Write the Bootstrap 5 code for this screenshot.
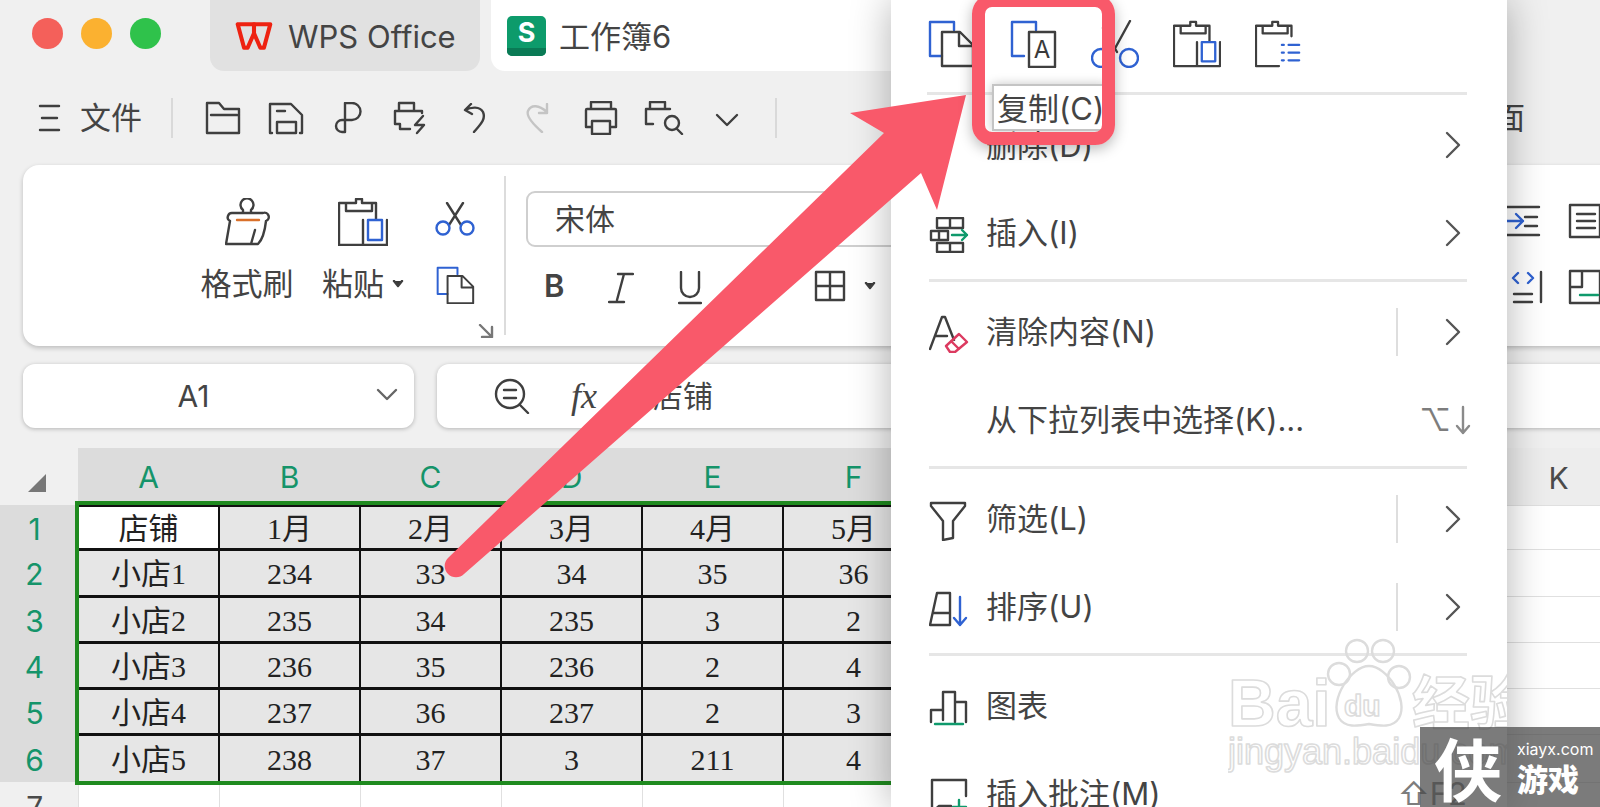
<!DOCTYPE html>
<html lang="zh-CN">

<head>
    <meta charset="UTF-8">
    <title>工作簿6</title>
    <link href="https://cdn.jsdelivr.net/npm/bootstrap@5.3.3/dist/css/bootstrap.min.css" rel="stylesheet">
    <style>
        body {
            background: #f0f0f0;
            color: #444;
            font-family: "Inter", "Noto Sans CJK SC", sans-serif;
            overflow: hidden;
        }

        svg { fill: none; stroke: #3f3f3f; stroke-width: 2.4; stroke-linecap: round; stroke-linejoin: round; flex: none; }
        .st-b { stroke: #2f62d2; }
        .st-g { stroke: #0f9a6c; }
        .st-r { stroke: #dc3a60; }
        .icon-text { fill: #3a3a3a; stroke: none; font: 24px "Inter", sans-serif; }

        .page-wrap { width: 1600px; height: 807px; overflow: hidden; position: relative; }

        /* title bar */
        .title-bar { height: 71px; }
        .lights { width: 210px; padding: 0 0 5px 32px; gap: 18px; }
        .light { width: 31px; height: 31px; border-radius: 50%; }
        .tab-item { height: 71px; font-size: 31px; border-radius: 0 0 14px 14px; }
        .tab-item span { padding-top: 3px; }
        .tab-wps { width: 270px; background: #e1e1e1; padding-left: 25px; gap: 15px; }
        .tab-book { width: 500px; background: #fff; margin-left: 11px; padding-left: 16px; gap: 13px; }

        /* quick toolbar */
        .quick-bar { height: 94px; padding-left: 38px; }
        .quick-name { font-size: 31px; margin-left: 19px; width: 91px; }
        .quick-sep { width: 2px; height: 40px; background: #d9d9d9; }
        .quick-btn { width: 63px; text-align: center; }
        .quick-end { font-size: 31px; margin-right: 75px; }

        /* ribbon */
        .ribbon-card { width: 1600px; height: 181px; margin-left: 23px; border: 0; border-radius: 16px 0 0 16px; box-shadow: 0 2px 5px rgba(0, 0, 0, .22); }
        .rb-left { width: 481px; position: relative; padding: 33px 0 0 176px; }
        .rb-col { font-size: 31px; line-height: 40px; }
        .rb-col svg { height: 48px; margin-bottom: 18px; }
        .rb-corner { position: absolute; right: 10px; bottom: 8px; }
        .rb-vsep { width: 2px; height: 159px; margin-top: 11px; background: #dcdcdc; }
        .rb-font { margin-left: 20px; padding-top: 26px; }
        .font-box { width: 520px; height: 56px; border: 2px solid #cfcfcf; border-radius: 9px; font-size: 30px; padding-left: 27px; }
        .font-btns { height: 78px; padding-left: 18px; }
        .font-btn { width: 70px; font-size: 31px; }
        .rb-right { margin-left: auto; padding: 38px 0 0 0; width: 93px; margin-right: 23px; }

        /* formula row */
        .formula-row { height: 64px; margin: 18px 0 20px 23px; gap: 23px; }
        .name-box, .formula-box { flex: none; background: #fff; border-radius: 12px; box-shadow: 0 1px 4px rgba(0, 0, 0, .25); font-size: 30px; }
        .name-box { width: 391px; position: relative; }
        .name-box svg { position: absolute; right: 16px; top: 24px; }
        .formula-box { width: 1200px; padding-left: 57px; }
        .fx-label { font: italic 36px "Liberation Serif", serif; margin: 0 56px 0 41px; }

        /* sheet */
        .sheet-table { table-layout: fixed; width: 1629px; border-collapse: collapse; }
        .sheet-table col.col-row { width: 78px; }
        .sheet-table col.col-data { width: 141px; }
        .sheet-table th { font-weight: 400; font-size: 30px; text-align: center; padding: 3px 0 0; background: #dcdcdc; color: #15946a; line-height: 1; }
        .sheet-table tr th:first-child { padding-right: 8px; }
        .sheet-table th.idle { background: #ededed; color: #4a4a4a; }
        .sheet-table td { padding: 3px 0 0; text-align: center; font: 30px "Liberation Serif", "Noto Sans CJK SC", serif; color: #222; background: #e6e6e6; border: 2px solid #111; border-width: 3px 2px; line-height: 1; white-space: nowrap; }
        .sheet-table td.white-cell { background: #fff; }
        .sheet-table td.blank { background: #fff; border: 1px solid #e0e0e0; }
        .corner-cell { background: #f0f0f0 !important; }
        .corner-mark { display: block; margin: 10px 0 0 28px; width: 0; height: 0; border-left: 18px solid transparent; border-bottom: 18px solid #777; }
        .sel-frame { position: absolute; left: 75px; top: 501px; width: 900px; height: 284px; border: 4px solid #1f8a1f; pointer-events: none; }

        /* context menu */
        .ctx-menu.dropdown-menu { left: 891px; top: 0; width: 616px; height: 807px; padding: 0; margin: 0; border: 0; border-radius: 0; background: #fff; box-shadow: 0 0 38px rgba(0, 0, 0, .3); overflow: hidden; color: #444; }
        .ctx-top { height: 95px; margin: 0 40px 0 36px; padding-top: 20px; gap: 34px; border-bottom: 3px solid #e6e6e6; align-items: flex-start; }
        .ctx-group { margin: 0 40px 0 38px; padding: 6px 0 2px; border-bottom: 3px solid #e6e6e6; }
        .ctx-group.last-group { border-bottom: 0; }
        .ctx-item { height: 88px; font-size: 31px; }
        .ctx-ico { width: 57px; }
        .ctx-vsep { width: 2px; height: 48px; background: #dedede; margin-right: 47px; }
        .ctx-key { color: #7d7d7d; font-size: 31px; }

        /* overlays */
        .arrow-layer { position: absolute; left: 0; top: 0; pointer-events: none; stroke: none; z-index: 1010; }
        .copy-tip { position: absolute; left: 992px; top: 84px; width: 115px; height: 47px; background: #fff; border: 2px solid #c4c4c4; box-shadow: 0 0 10px rgba(0, 0, 0, .22); font-size: 31px; line-height: 46px; padding-left: 3px; white-space: nowrap; overflow: hidden; z-index: 1005; }
        .focus-box { position: absolute; left: 972px; top: -6px; width: 143px; height: 151px; border: 13px solid #f9596a; border-radius: 20px; box-shadow: 0 4px 14px rgba(0, 0, 0, .28); z-index: 1011; }

        .bd-mark { position: absolute; left: 337px; top: 632px; width: 279px; height: 150px; stroke: #dcdcdc; }
        .bd-mark text { fill: #fff; stroke: #dcdcdc; stroke-width: 1.6; }
        .site-badge { position: absolute; left: 1420px; top: 727px; width: 180px; height: 80px; background: rgba(72, 72, 72, .72); color: #fff; z-index: 1012; }
        .site-big { font: 700 68px/80px "Noto Sans CJK SC", sans-serif; margin-left: 14px; width: 83px; }
        .site-small { font: 16px/20px "Inter", sans-serif; }
        .site-game { font: 900 31px/38px "Noto Sans CJK SC", sans-serif; }
    </style>
</head>

<body>
    <div class="page-wrap">

        <!-- title bar -->
        <div class="title-bar d-flex">
            <div class="lights d-flex align-items-center">
                <span class="light" style="background:#f4605a"></span>
                <span class="light" style="background:#fbb130"></span>
                <span class="light" style="background:#2fc24b"></span>
            </div>
            <div class="tab-item tab-wps d-flex align-items-center">
                <svg width="38" height="30" viewBox="0 0 42 32" style="stroke:#ee2211;stroke-width:4.5">
                    <path d="M3 3h36l-7 26h-4l-7-16-7 16h-4z" />
                    <path d="M21 3v10" />
                </svg>
                <span>WPS Office</span>
            </div>
            <div class="tab-item tab-book d-flex align-items-center">
                <svg width="39" height="40" viewBox="0 0 39 40" style="stroke:none">
                    <rect width="39" height="40" rx="5" fill="#0d9b6b" />
                    <path d="M0 32h39v3a5 5 0 0 1-5 5H5a5 5 0 0 1-5-5z" fill="#0a7a55" />
                    <text x="19.5" y="26" text-anchor="middle" fill="#fff" style="font:700 27px Inter,sans-serif">S</text>
                </svg>
                <span>工作簿6</span>
            </div>
        </div>

        <!-- quick access toolbar -->
        <div class="quick-bar d-flex align-items-center">
            <svg width="23" height="30" viewBox="0 0 23 30"><path d="M2 3h19M4 15h15M2 27h19" /></svg>
            <span class="quick-name">文件</span>
            <span class="quick-sep"></span>
            <div class="d-flex align-items-center" style="margin-left:18px">
                <span class="quick-btn"><svg width="36" height="34" viewBox="0 0 36 34"><path d="M2 32V2h12l5 6h15v24zM6 14h26" /></svg></span>
                <span class="quick-btn"><svg width="36" height="34" viewBox="0 0 36 34"><path d="M4 32H2V3h21l11 11v18h-2M9 32V21h19v11zM9 10h8" /></svg></span>
                <span class="quick-btn"><svg width="30" height="32" viewBox="0 0 30 32"><path d="M11 30H8a6 6 0 0 1 0-12h10a8.5 8.5 0 0 0 0-17h-7v29" /></svg></span>
                <span class="quick-btn"><svg width="38" height="34" viewBox="0 0 38 34"><path d="M6 10V2h15v8M29 12v-2H2v13h5v5h10M30 15l-8 9h9l-7 8" /></svg></span>
                <span class="quick-btn"><svg width="24" height="30" viewBox="0 0 24 30"><path d="M8 1L2 7l7 4M2 7c6-3 15-4 18 2 3 7-2 12-9 20" /></svg></span>
                <span class="quick-btn"><svg width="26" height="30" viewBox="0 0 26 30" style="stroke:#c4c4c4"><path d="M17 29C9 22 1 13 3 8 6 1 14 2 22 9M22 1v9h-8" /></svg></span>
                <span class="quick-btn"><svg width="34" height="34" viewBox="0 0 34 34"><path d="M7 8V1h20v7M7 26H2V9a1 1 0 0 1 1-1h28a1 1 0 0 1 1 1v17h-5M8 20h18v13H8z" /></svg></span>
                <span class="quick-btn"><svg width="40" height="34" viewBox="0 0 40 34"><path d="M6 8V1h15v7M9 23H2V8h24" /><circle cx="28" cy="22" r="7" /><path d="M33 28l5 5" /></svg></span>
                <span class="quick-btn"><svg width="24" height="14" viewBox="0 0 24 14"><path d="M2 2l10 10L22 2" /></svg></span>
            </div>
            <span class="quick-sep" style="margin-left:17px"></span>
            <span class="quick-end ms-auto">面</span>
        </div>

        <!-- ribbon -->
        <div class="card ribbon-card flex-row">
            <div class="rb-left d-flex">
                <div class="rb-col text-center" style="width:96px">
                    <svg width="45" height="48" viewBox="0 0 45 48"><path d="M18 15v-3a6.5 6.5 0 1 1 8 0v3M5 23a4 4 0 0 1-2-5 4 4 0 0 1 4-3h31a4 4 0 0 1 3 8M5 23L1 46h32c5-5 7-14 8-23M30 32l-4 14" /><path d="M12 22h22" style="stroke:#d9702a" /></svg>
                    <div>格式刷</div>
                </div>
                <div class="rb-col text-center" style="width:88px;margin-left:24px">
                    <svg width="50" height="48" viewBox="0 0 50 48"><path d="M8 5H1v42h24M34 5h4v16M8 13V5h10V1h6v4h10v8zM25 22v25h24V22" /><rect x="30" y="22" width="14" height="20" class="st-b" /></svg>
                    <div class="d-flex align-items-center justify-content-center gap-2">粘贴<svg width="12" height="8" viewBox="0 0 12 8" style="height:8px;margin:0;fill:#3a3a3a"><path d="M2 1l4 5 4-5" /></svg></div>
                </div>
                <div class="d-flex flex-column align-items-center" style="margin-left:28px;width:40px">
                    <svg width="40" height="34" viewBox="0 0 40 34" style="margin-top:4px"><path d="M12 1l14 22M28 1L14 23" /><circle cx="8" cy="26" r="6.5" class="st-b" /><circle cx="32" cy="26" r="6.5" class="st-b" /></svg>
                    <svg width="40" height="38" viewBox="0 0 48 46" style="margin-top:30px"><path d="M15 34H3V2h24v8" class="st-b" /><path d="M15 12h18l13 13v20H15zM32 12v14h14" /></svg>
                </div>
                <svg class="rb-corner" width="16" height="14" viewBox="0 0 16 14" style="stroke:#777"><path d="M2 1l12 12M14 3v10H4" /></svg>
            </div>
            <div class="rb-vsep"></div>
            <div class="rb-font">
                <div class="font-box d-flex align-items-center">宋体</div>
                <div class="font-btns d-flex align-items-center">
                    <span class="font-btn fw-semibold" style="width:64px">B</span>
                    <span class="font-btn">
                        <svg width="26" height="32" viewBox="0 0 26 32"><path d="M10 2h15M16 2L9 28M1 30h15" /></svg>
                    </span>
                    <span class="font-btn">
                        <svg width="24" height="34" viewBox="0 0 24 34"><path d="M3 1v16a9 9 0 0 0 18 0V1M1 32h22" /></svg>
                    </span>
                    <span style="width:66px"></span>
                    <svg width="32" height="32" viewBox="0 0 32 32"><path d="M2 2h28v28H2zM16 2v28M2 16h28" /></svg>
                    <svg style="margin-left:18px" width="12" height="8" viewBox="0 0 12 8"><path d="M2 1l4 5 4-5" style="fill:#3a3a3a" /></svg>
                </div>
            </div>
            <div class="rb-right">
                <div class="d-flex align-items-center" style="gap:25px;margin-left:-4px">
                    <svg width="40" height="32" viewBox="0 0 40 32"><path d="M4 2h32M22 12h12M22 21h12M4 30h32" /><path class="st-b" d="M2 16h18M13 9l7 7-7 7" /></svg>
                    <svg width="34" height="36" viewBox="0 0 34 36"><path d="M2 2h30v32H2zM9 11h18M9 18h18M9 25h18" /></svg>
                </div>
                <div class="d-flex align-items-center" style="gap:25px;margin-top:30px;margin-left:-4px">
                    <svg width="40" height="34" viewBox="0 0 40 34"><path d="M2 2v30M38 2v30M11 24h18M11 32h18" /><path class="st-b" d="M15 3l-5 5 5 5M25 3l5 5-5 5" /></svg>
                    <svg width="34" height="36" viewBox="0 0 34 36"><path d="M2 2h30v32H2zM2 18h12V2" /><path class="st-g" d="M12 26h18" /></svg>
                </div>
            </div>
        </div>

        <!-- name box and formula bar -->
        <div class="formula-row d-flex">
            <div class="name-box d-flex align-items-center justify-content-center" style="padding-right:50px">A1
                <svg width="22" height="14" viewBox="0 0 22 14" style="stroke:#666"><path d="M2 2l9 9 9-9" /></svg>
            </div>
            <div class="formula-box d-flex align-items-center">
                <svg width="36" height="36" viewBox="0 0 36 36"><circle cx="16" cy="16" r="14" /><path d="M10 12h12M10 20h12M26 27l8 8" /></svg>
                <span class="fx-label">fx</span>
                <span>店铺</span>
            </div>
        </div>

        <!-- sheet -->
        <table class="sheet-table">
            <colgroup>
                <col class="col-row">
                <col class="col-data"><col class="col-data"><col class="col-data"><col class="col-data"><col class="col-data"><col class="col-data">
                <col class="col-data"><col class="col-data"><col class="col-data"><col class="col-data"><col class="col-data">
            </colgroup>
            <tr style="height:57px">
                <th class="corner-cell"><span class="corner-mark"></span></th>
                <th>A</th><th>B</th><th>C</th><th>D</th><th>E</th><th>F</th><th>G</th>
                <th class="idle">H</th><th class="idle">I</th><th class="idle">J</th><th class="idle">K</th>
            </tr>
            <tr style="height:44px">
                <th>1</th><td class="white-cell">店铺</td><td>1月</td><td>2月</td><td>3月</td><td>4月</td><td>5月</td><td></td>
                <td class="blank"></td><td class="blank"></td><td class="blank"></td><td class="blank"></td>
            </tr>
            <tr style="height:47px">
                <th>2</th><td>小店1</td><td>234</td><td>33</td><td>34</td><td>35</td><td>36</td><td></td>
                <td class="blank"></td><td class="blank"></td><td class="blank"></td><td class="blank"></td>
            </tr>
            <tr style="height:46px">
                <th>3</th><td>小店2</td><td>235</td><td>34</td><td>235</td><td>3</td><td>2</td><td></td>
                <td class="blank"></td><td class="blank"></td><td class="blank"></td><td class="blank"></td>
            </tr>
            <tr style="height:46px">
                <th>4</th><td>小店3</td><td>236</td><td>35</td><td>236</td><td>2</td><td>4</td><td></td>
                <td class="blank"></td><td class="blank"></td><td class="blank"></td><td class="blank"></td>
            </tr>
            <tr style="height:46px">
                <th>5</th><td>小店4</td><td>237</td><td>36</td><td>237</td><td>2</td><td>3</td><td></td>
                <td class="blank"></td><td class="blank"></td><td class="blank"></td><td class="blank"></td>
            </tr>
            <tr style="height:48px">
                <th>6</th><td>小店5</td><td>238</td><td>37</td><td>3</td><td>211</td><td>4</td><td></td>
                <td class="blank"></td><td class="blank"></td><td class="blank"></td><td class="blank"></td>
            </tr>
            <tr style="height:46px">
                <th class="idle corner-cell">7</th>
                <td class="blank"></td><td class="blank"></td><td class="blank"></td><td class="blank"></td><td class="blank"></td><td class="blank"></td>
                <td class="blank"></td><td class="blank"></td><td class="blank"></td><td class="blank"></td><td class="blank"></td>
            </tr>
        </table>
        <div class="sel-frame"></div>

        <!-- context menu -->
        <div class="dropdown-menu show ctx-menu">
            <div class="ctx-top d-flex">
                <svg width="48" height="48" viewBox="0 0 48 48"><path d="M15 36H3V2h24v8" class="st-b" /><path d="M15 12h18l13 13v21H15zM32 12v14h14" /></svg>
                <svg width="48" height="48" viewBox="0 0 48 48"><path d="M15 36H3V2h24v8" class="st-b" /><path d="M20 12h26v35H20z" /><text class="icon-text" x="33" y="38" text-anchor="middle">A</text></svg>
                <svg width="48" height="48" viewBox="0 0 48 48"><path d="M39 1L22 32M12 8l14 24" /><circle cx="10" cy="38" r="9" class="st-b" /><circle cx="38" cy="38" r="9" class="st-b" /></svg>
                <svg width="48" height="48" viewBox="0 0 50 48"><path d="M8 5H1v42h24M34 5h4v16M8 13V5h10V1h6v4h10v8zM25 22v25h24V22" /><rect x="30" y="22" width="14" height="20" class="st-b" /></svg>
                <svg width="48" height="48" viewBox="0 0 50 48"><path d="M8 5H1v42h24M34 5h4v11M8 13V5h10V1h6v4h10v8z" /><path class="st-b" d="M28 25h2M35 25h11M28 33h2M35 33h11M28 41h2M35 41h11" /></svg>
            </div>
            <div class="ctx-group">
                <div class="ctx-item d-flex align-items-center">
                    <span class="ctx-ico"></span><span style="padding-top:2px">删除(D)</span>
                    <svg class="ms-auto" style="margin-right:6px" width="16" height="28" viewBox="0 0 16 28"><path d="M2 2l12 12L2 26" style="stroke:#555" /></svg>
                </div>
                <div class="ctx-item d-flex align-items-center">
                    <span class="ctx-ico"><svg width="40" height="36" viewBox="0 0 40 36"><path d="M8 1h26v10H8zM21 1v10M2 14h17v9H2zM10 14v9M8 26h26v9H8zM21 26v9" /><path class="st-g" d="M23 18h15M33 13l5 5-5 5" /></svg></span>
                    <span>插入(I)</span>
                    <svg class="ms-auto" style="margin-right:6px" width="16" height="28" viewBox="0 0 16 28"><path d="M2 2l12 12L2 26" style="stroke:#555" /></svg>
                </div>
            </div>
            <div class="ctx-group">
                <div class="ctx-item d-flex align-items-center">
                    <span class="ctx-ico"><svg width="40" height="38" viewBox="0 0 40 38"><path d="M1 34L13 2h3l9 23M6 21h12" /><path class="st-r" d="M17 31l13-12 8 8-12 10h-5zM22 26l8 8" /></svg></span>
                    <span>清除内容(N)</span>
                    <span class="ctx-vsep ms-auto"></span>
                    <svg style="margin-right:6px" width="16" height="28" viewBox="0 0 16 28"><path d="M2 2l12 12L2 26" style="stroke:#555" /></svg>
                </div>
                <div class="ctx-item d-flex align-items-center">
                    <span class="ctx-ico"></span>
                    <span>从下拉列表中选择(K)...</span>
                    <span class="ctx-key ms-auto d-flex align-items-center" style="margin-right:-4px">⌥<svg class="ms-1" width="16" height="30" viewBox="0 0 16 30" style="stroke:#8a8a8a"><path d="M8 2v26M2 21l6 7 6-7" /></svg></span>
                </div>
            </div>
            <div class="ctx-group">
                <div class="ctx-item d-flex align-items-center">
                    <span class="ctx-ico"><svg width="38" height="40" viewBox="0 0 38 40"><path d="M2 2h34v3L24 20v17l-10 2V20L2 5z" /></svg></span>
                    <span>筛选(L)</span>
                    <span class="ctx-vsep ms-auto"></span>
                    <svg style="margin-right:6px" width="16" height="28" viewBox="0 0 16 28"><path d="M2 2l12 12L2 26" style="stroke:#555" /></svg>
                </div>
                <div class="ctx-item d-flex align-items-center">
                    <span class="ctx-ico"><svg width="40" height="36" viewBox="0 0 40 36"><path d="M1 34L8 2h13v32zM4 22h17" /><path class="st-b" d="M31 6v28M25 27l6 7 6-7" /></svg></span>
                    <span>排序(U)</span>
                    <span class="ctx-vsep ms-auto"></span>
                    <svg style="margin-right:6px" width="16" height="28" viewBox="0 0 16 28"><path d="M2 2l12 12L2 26" style="stroke:#555" /></svg>
                </div>
            </div>
            <div class="ctx-group last-group">
                <div class="ctx-item d-flex align-items-center">
                    <span class="ctx-ico"><svg width="40" height="36" viewBox="0 0 40 36"><path d="M2 32V20h12V2h12v30M26 12h11v20M14 20v10" /><path class="st-g" d="M6 34h28" /></svg></span>
                    <span>图表</span>
                </div>
                <div class="ctx-item d-flex align-items-center">
                    <span class="ctx-ico"><svg width="40" height="36" viewBox="0 0 40 36"><path d="M22 28H10l-7 6V2h34v16" /><path class="st-g" d="M30 22v13M24 29h13" /></svg></span>
                    <span>插入批注(M)</span>
                    <span class="ctx-key ms-auto">⇧F2</span>
                </div>
            </div>

            <!-- watermark -->
            <svg class="bd-mark" viewBox="0 0 279 150">
                <text x="0" y="94" style="font:700 66px 'Liberation Sans',sans-serif">Bai</text>
                <circle cx="129" cy="19" r="11" /><circle cx="155" cy="19" r="11" /><circle cx="111" cy="42" r="11" /><circle cx="171" cy="45" r="11" />
                <path d="M141 34c18 0 40 34 30 52-6 10-18 8-30 6-12 2-24 4-30-6-10-18 12-52 30-52z" />
                <text x="116" y="84" style="font:700 30px 'Liberation Sans',sans-serif">du</text>
                <text x="184" y="92" style="font:700 58px 'Noto Sans CJK SC',sans-serif">经验</text>
                <text x="0" y="132" style="font:400 36px 'Liberation Sans',sans-serif">jingyan.baidu.com</text>
            </svg>
        </div>

        <div class="copy-tip">复制(C)</div>

        <svg class="arrow-layer" width="1600" height="807" viewBox="0 0 1600 807">
            <path fill="#f9596a" d="M448 558L884 133L850 113L966 95L937 210L921 173L464 574A11 11 0 0 1 448 558Z" />
        </svg>
        <div class="focus-box"></div>

        <div class="site-badge d-flex">
            <div class="site-big">侠</div>
            <div style="padding:12px 0 0 0">
                <div class="site-small">xiayx.com</div>
                <div class="site-game">游戏</div>
            </div>
        </div>
    </div>

    <script src="https://cdn.jsdelivr.net/npm/bootstrap@5.3.3/dist/js/bootstrap.bundle.min.js"></script>
</body>

</html>
